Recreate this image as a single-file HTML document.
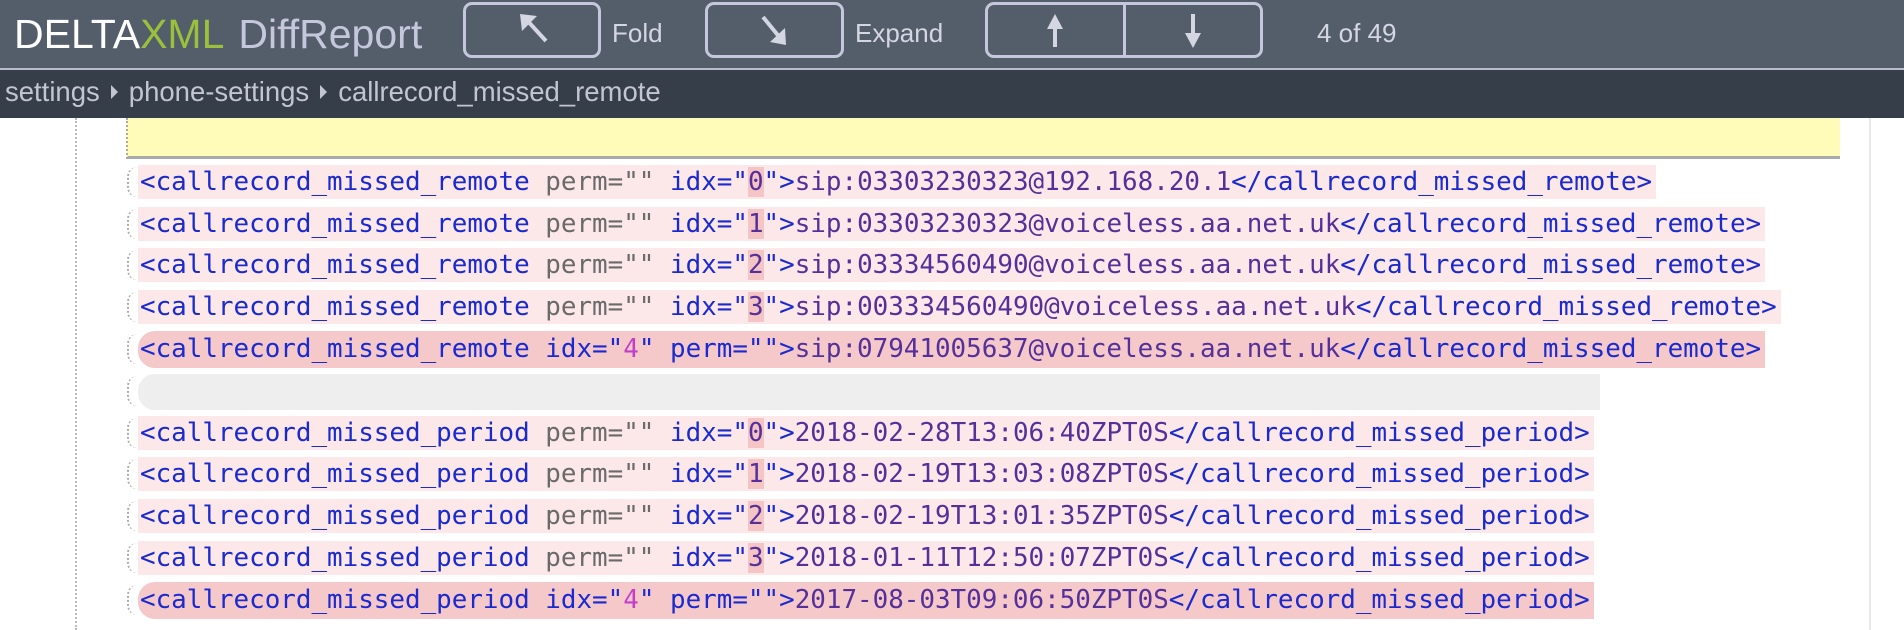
<!DOCTYPE html>
<html><head><meta charset="utf-8"><style>
*{margin:0;padding:0;box-sizing:border-box}
body{width:1904px;height:630px;overflow:hidden;background:#fff;font-family:"Liberation Sans",sans-serif;position:relative}
#hdr{position:absolute;left:0;top:0;width:1904px;height:70px;background:#545d6a;border-bottom:2px solid #b9bccb}
#bc{position:absolute;left:0;top:70px;width:1904px;height:48px;background:#363e4a;color:#c3c6d2;font-size:27.5px;line-height:44px;padding-left:5px;white-space:nowrap}
#bc .tri{display:inline-block;width:0;height:0;border-left:7px solid #c3c6d2;border-top:7px solid transparent;border-bottom:7px solid transparent;margin:0 11px;vertical-align:middle;position:relative;top:-2px}
.logo{position:absolute;left:14px;top:9px;font-size:41px;color:#fff;line-height:50px;white-space:nowrap}
.logo .x{color:#9bc13c}.logo .d{color:#c5c8dc;margin-left:14px}
.btn{position:absolute;top:2px;height:56px;border:3px solid #c5c8dc;border-radius:9px}
.lbl{position:absolute;top:18px;font-size:26px;color:#d4d6e2}
.row{position:absolute;left:138px;height:34px;font-family:"DejaVu Sans Mono","Liberation Mono",monospace;font-size:25.9px;line-height:34px;white-space:pre;color:#1a2ad0;background:#fce8e8;padding-left:2px;padding-right:4px}
.row.big{background:#f5c9c9;border-radius:17px 0 0 17px}
.a{color:#6a6a6a}.v{color:#55309a}.h{background:#f5c4c4}.m{color:#c43fc9}
.arc{position:absolute;left:127px;width:10px;height:30px;border-left:2px dotted #aaa;border-radius:10px 0 0 10px}
</style></head><body>
<div id="hdr">
 <div class="logo">DELTA<span class="x">XML</span><span class="d">DiffReport</span></div>
 <div class="btn" style="left:463px;width:138px"><svg width="132" height="50" viewBox="0 0 132 50"><path d="M58 12 L80 36" stroke="#d4d6e2" stroke-width="4" fill="none"/><path d="M54 9 L71 11 L56 26 Z" fill="#d4d6e2"/></svg></div>
 <div class="lbl" style="left:612px">Fold</div>
 <div class="btn" style="left:705px;width:139px"><svg width="133" height="50" viewBox="0 0 133 50"><path d="M55 12 L73 34" stroke="#d4d6e2" stroke-width="4" fill="none"/><path d="M78 40 L62 37 L77 23 Z" fill="#d4d6e2"/></svg></div>
 <div class="lbl" style="left:855px">Expand</div>
 <div class="btn" style="left:985px;width:278px"><div style="position:absolute;left:135px;top:0;width:3px;height:50px;background:#c5c8dc"></div><svg width="272" height="50" viewBox="0 0 272 50"><path d="M67 16 V42" stroke="#d4d6e2" stroke-width="4"/><path d="M59 24 L67 9 L75 24 Z" fill="#d4d6e2"/><path d="M205 9 V34" stroke="#d4d6e2" stroke-width="4"/><path d="M197 28 L205 43 L213 28 Z" fill="#d4d6e2"/></svg></div>
 <div class="lbl" style="left:1317px">4 of 49</div>
</div>
<div id="bc">settings<span class="tri"></span>phone-settings<span class="tri"></span>callrecord_missed_remote</div>
<div style="position:absolute;left:75px;top:118px;height:512px;border-left:2px dotted #bbb"></div>
<div style="position:absolute;left:126px;top:118px;width:1714px;height:41px;background:#fffbb8;border-left:2px dotted #aaa;border-bottom:3px solid #aaa"></div>
<div style="position:absolute;left:1869px;top:118px;width:2px;height:512px;background:#e8e8e8"></div>

<div class="arc" style="top:167px"></div>
<div class="row" style="top:165px">&lt;callrecord_missed_remote <span class="a">perm=""</span> idx="<span class="v h">0</span>"&gt;<span class="v">sip:03303230323@192.168.20.1</span>&lt;/callrecord_missed_remote&gt;</div>
<div class="arc" style="top:209px"></div>
<div class="row" style="top:207px">&lt;callrecord_missed_remote <span class="a">perm=""</span> idx="<span class="v h">1</span>"&gt;<span class="v">sip:03303230323@voiceless.aa.net.uk</span>&lt;/callrecord_missed_remote&gt;</div>
<div class="arc" style="top:250px"></div>
<div class="row" style="top:248px">&lt;callrecord_missed_remote <span class="a">perm=""</span> idx="<span class="v h">2</span>"&gt;<span class="v">sip:03334560490@voiceless.aa.net.uk</span>&lt;/callrecord_missed_remote&gt;</div>
<div class="arc" style="top:292px"></div>
<div class="row" style="top:290px">&lt;callrecord_missed_remote <span class="a">perm=""</span> idx="<span class="v h">3</span>"&gt;<span class="v">sip:003334560490@voiceless.aa.net.uk</span>&lt;/callrecord_missed_remote&gt;</div>
<div class="arc" style="top:334px"></div>
<div class="row big" style="top:331px;height:37px;line-height:37px">&lt;callrecord_missed_remote idx="<span class="m">4</span>" perm=""&gt;<span class="v">sip:07941005637@voiceless.aa.net.uk</span>&lt;/callrecord_missed_remote&gt;</div>
<div class="arc" style="top:376px"></div>
<div class="row big" style="top:374px;width:1462px;height:36px;background:#eeeeee"></div>
<div class="arc" style="top:418px"></div>
<div class="row" style="top:416px">&lt;callrecord_missed_period <span class="a">perm=""</span> idx="<span class="v h">0</span>"&gt;<span class="v">2018-02-28T13:06:40ZPT0S</span>&lt;/callrecord_missed_period&gt;</div>
<div class="arc" style="top:459px"></div>
<div class="row" style="top:457px">&lt;callrecord_missed_period <span class="a">perm=""</span> idx="<span class="v h">1</span>"&gt;<span class="v">2018-02-19T13:03:08ZPT0S</span>&lt;/callrecord_missed_period&gt;</div>
<div class="arc" style="top:501px"></div>
<div class="row" style="top:499px">&lt;callrecord_missed_period <span class="a">perm=""</span> idx="<span class="v h">2</span>"&gt;<span class="v">2018-02-19T13:01:35ZPT0S</span>&lt;/callrecord_missed_period&gt;</div>
<div class="arc" style="top:543px"></div>
<div class="row" style="top:541px">&lt;callrecord_missed_period <span class="a">perm=""</span> idx="<span class="v h">3</span>"&gt;<span class="v">2018-01-11T12:50:07ZPT0S</span>&lt;/callrecord_missed_period&gt;</div>
<div class="arc" style="top:585px"></div>
<div class="row big" style="top:582px;height:37px;line-height:37px">&lt;callrecord_missed_period idx="<span class="m">4</span>" perm=""&gt;<span class="v">2017-08-03T09:06:50ZPT0S</span>&lt;/callrecord_missed_period&gt;</div>
</body></html>
